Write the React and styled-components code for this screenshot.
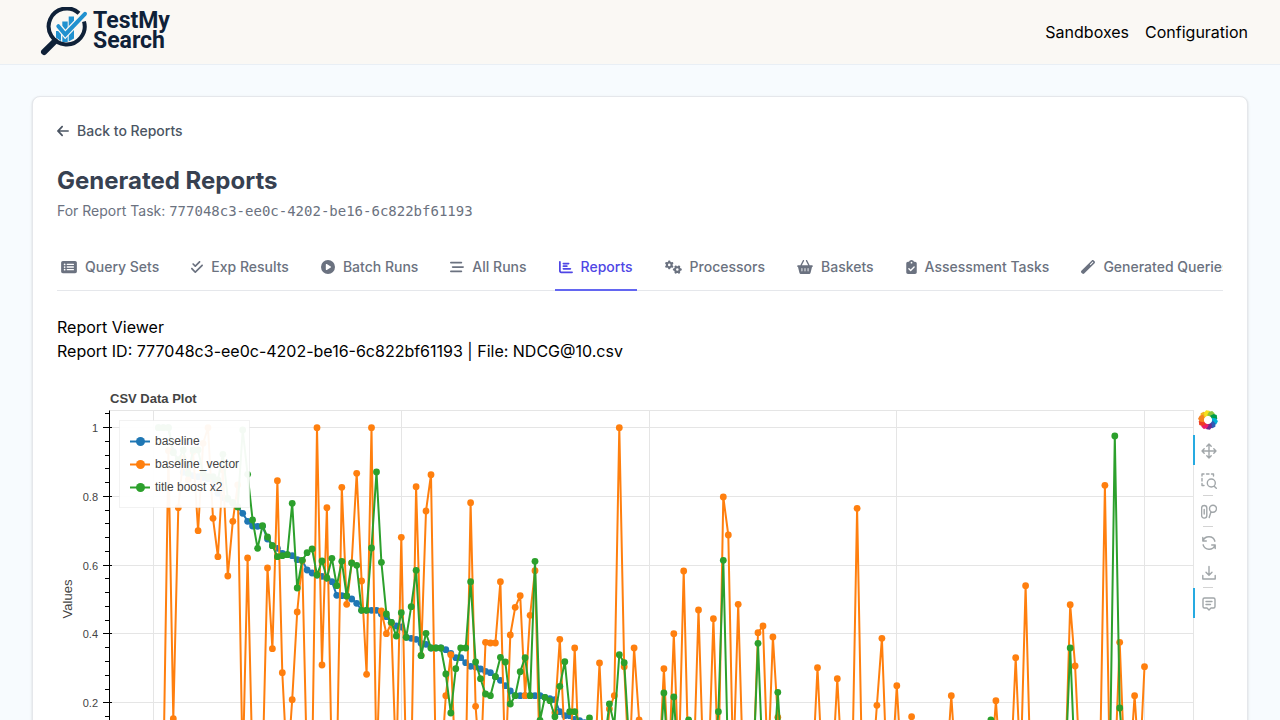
import React from "react";
import styled, { createGlobalStyle } from "styled-components";
import {
  FaArrowLeft,
  FaRectangleList,
  FaCheckDouble,
  FaCirclePlay,
  FaBarsStaggered,
  FaChartBar,
  FaGears,
  FaBasketShopping,
  FaClipboardCheck,
  FaWandMagic,
} from "react-icons/fa6";

const GlobalStyle = createGlobalStyle`
  *, *::before, *::after { box-sizing: border-box; }
  body {
    margin: 0;
    background: #f7fbfe;
    color: #000;
    font-family: Inter, "Liberation Sans", sans-serif;
    font-size: 16px;
    line-height: 24px;
  }
`;

const Header = styled.header`
  display: flex;
  align-items: center;
  justify-content: space-between;
  height: 65px;
  padding: 0 32px 0 40px;
  background: #faf8f4;
  border-bottom: 1px solid #e9eff5;
`;

const Brand = styled.a`
  display: flex;
  align-items: center;
  gap: 3px;
  color: #0f2138;
  text-decoration: none;
`;

const BrandName = styled.span`
  padding-bottom: 2px;
  font-family: Roboto, "Liberation Sans", sans-serif;
  font-size: 23px;
  font-weight: 700;
  line-height: 20px;
`;

const HeaderLinks = styled.nav`
  display: flex;
  gap: 16px;
`;

const HeaderLink = styled.a`
  color: #000;
  text-decoration: none;
`;

const Main = styled.main`
  padding: 31px 32px;
`;

const Card = styled.section`
  padding: 24px;
  background: #fff;
  border: 1px solid #e5e7eb;
  border-radius: 8px;
  box-shadow: 0 1px 3px rgba(0, 0, 0, 0.1), 0 1px 2px rgba(0, 0, 0, 0.06);
`;

const BackLink = styled.a`
  display: flex;
  align-items: center;
  gap: 8px;
  width: fit-content;
  margin-bottom: 24px;
  color: #4b5563;
  font-size: 14px;
  font-weight: 500;
  line-height: 20px;
  text-decoration: none;

  svg {
    width: 12px;
    height: 14px;
  }
`;

const Title = styled.h1`
  margin: 0;
  color: #374151;
  font-size: 24px;
  font-weight: 700;
  line-height: 32px;
`;

const Subtitle = styled.p`
  margin: 4px 0 24px;
  color: #6b7280;
  font-size: 14px;
  line-height: 20px;
`;

const TaskId = styled.span`
  font-family: "DejaVu Sans Mono", monospace;
`;

const Tabs = styled.nav`
  display: flex;
  gap: 24px;
  overflow: hidden;
  box-shadow: inset 0 -1px 0 #e5e7eb;
`;

const Tab = styled.a`
  display: flex;
  flex-shrink: 0;
  align-items: center;
  gap: 8px;
  padding: 12px 4px;
  border-bottom: 2px solid ${(p) => (p.$active ? "#6366f1" : "transparent")};
  color: ${(p) => (p.$active ? "#4f46e5" : "#6b7280")};
  font-size: 14px;
  font-weight: 500;
  line-height: 20px;
  white-space: nowrap;
  text-decoration: none;

  svg {
    width: ${(p) => p.$iconWidth}px;
    height: 14px;
  }
`;

const Summary = styled.div`
  margin: 24px 0;
`;

const SummaryLine = styled.p`
  margin: 0;
`;

const Figure = styled.div`
  display: flex;
  align-items: flex-start;
`;

const Plot = styled.svg`
  display: block;
  flex: 1;
  min-width: 0;
  height: auto;
  overflow: visible;
  font-family: "Liberation Sans", Arial, sans-serif;
`;

const Toolbar = styled.div`
  display: flex;
  flex-direction: column;
  align-items: center;
  width: 30px;
  padding-top: 18px;
`;

const ToolbarLogo = styled.a`
  display: grid;
  place-items: center;
  width: 30px;
  height: 30px;
`;

const Tool = styled.button`
  display: grid;
  place-items: center;
  width: 30px;
  height: 30px;
  padding: 1px 0 0;
  background: none;
  border: 0 solid transparent;
  border-left: 2px solid ${(p) => (p.$active ? "#26aae1" : "transparent")};
  color: #a1a6a9;
`;

const Divider = styled.span`
  width: 10px;
  height: 1px;
  background: #d3d3d3;
`;

const tabs = [
  { label: "Query Sets", Icon: FaRectangleList, iconWidth: 16 },
  { label: "Exp Results", Icon: FaCheckDouble, iconWidth: 12 },
  { label: "Batch Runs", Icon: FaCirclePlay, iconWidth: 14 },
  { label: "All Runs", Icon: FaBarsStaggered, iconWidth: 14 },
  { label: "Reports", Icon: FaChartBar, iconWidth: 14, active: true },
  { label: "Processors", Icon: FaGears, iconWidth: 17 },
  { label: "Baskets", Icon: FaBasketShopping, iconWidth: 16 },
  { label: "Assessment Tasks", Icon: FaClipboardCheck, iconWidth: 11 },
  { label: "Generated Queries", Icon: FaWandMagic, iconWidth: 14 },
];

/* Samples are depths below the plot's top edge, in thirds of a unit. */
const ZERO = 1084;
const COUNT = 200;

const baseline = {
  head: [
    53, 53, 53, 125, 150, 187, 192, 197, 200, 203, 206, 210, 250, 263, 268, 280, 291, 310, 334, 348,
    349, 349, 387, 407, 415, 430, 434, 437, 449, 451, 480, 489, 495, 499, 505, 515, 556, 557, 558, 567,
    580, 601, 601, 601, 601, 612, 620, 637, 648, 651, 682, 685, 688, 700, 703, 714, 714, 714, 719, 730,
    743, 743, 758, 769, 771, 777, 784, 788, 800, 811, 827, 843, 857, 857, 857, 857, 857, 857, 862, 866,
    869, 905, 917, 917, 928, 932, 938, 945, 970, 1000, 1030,
  ],
  tail: {},
};

const baselineVector = {
  head: [
    ZERO, ZERO, 122, 926, 293, 145, 210, 125, 362, 100, 53, 325, 440, 180, 498, 334, 225, ZERO, 444, ZERO,
    ZERO, ZERO, 474, 716, 212, 788, ZERO, 869, 606, 452, ZERO, ZERO, 53, 765, 293, ZERO, ZERO, 232, 583, 459,
    190, 513, 793, 53, ZERO, 603, 671, 640, ZERO, 382, ZERO, ZERO, 230, 736, 303, 194, ZERO, ZERO, 857, 734,
    ZERO, ZERO, ZERO, 278, 889, ZERO, 697, 699, 699, 515, ZERO, 675, 592, 557, 857, 616, 482, ZERO, ZERO, ZERO,
    908, 688, 1000, ZERO, 714, ZERO, ZERO, ZERO, ZERO, 759, ZERO, 897, 857, 53, 770, ZERO, 714, 930,
  ],
  tail: {
    103: 776, 105: 671, 107: 483, 110: 600, 113: 626, 115: 261, 116: 375, 118: 583, 122: 668, 123: 648,
    125: 681, 126: 922, 134: 773, 138: 806, 142: 295, 146: 886, 147: 685, 150: 827, 153: 920, 161: 857,
    170: 872, 174: 743, 176: 527, 185: 584, 186: 768, 192: 226, 195: 697, 198: 857, 200: 770,
  },
};

const titleBoost = {
  head: [
    53, 53, 53, 128, 150, 120, 190, 120, 120, 190, 200, 200, 210, 133, 265, 277, 291, 60, 193, 330,
    415, 347, 381, 407, 440, 437, 434, 280, 534, 451, 428, 417, 495, 453, 504, 445, 527, 454, 558, 459,
    466, 601, 601, 414, 186, 457, 612, 637, 678, 608, 682, 590, 481, 737, 670, 714, 714, 714, 792, 909,
    776, 714, 714, 515, 756, 806, 852, 857, 800, 742, 756, 882, 857, 785, 743, 857, 454, 931, 862, 872,
    920, 829, 755, 905, 905, 940, 940, 924, 1000, ZERO, 1000, 882, 945, 734, 758, 1000,
  ],
  tail: {
    103: 849, 105: 861, 108: 930, 114: 905, 115: 451, 122: 700, 126: 847, 169: 930, 185: 714, 194: 78, 195: 894,
  },
};

const series = [
  { name: "baseline", color: "#1f77b4", data: baseline },
  { name: "baseline_vector", color: "#ff7f0e", data: baselineVector },
  { name: "title boost x2", color: "#2ca02c", data: titleBoost },
];

const PLOT = { left: 52.5, right: 1136.5, top: 23.5, bottom: 402.5 };

const toPoints = ({ head, tail }) =>
  Array.from({ length: COUNT }, (_, k) => {
    const i = k + 1;
    const depth = head[k] ?? tail[i] ?? ZERO;
    return [+(96.5 + i * 4.955).toFixed(1), +(23 + depth / 3).toFixed(1)];
  });

const yTicks = ["1", "0.8", "0.6", "0.4", "0.2"].map((label, k) => ({
  label,
  y: Math.floor(40.6 + k * 68.8) + 0.5,
}));
const minorTicks = Array.from({ length: 27 }, (_, k) => Math.floor(26.8 + k * 13.76) + 0.5);
const xGrid = [96.5, 344.5, 592.5, 839.5, 1087.5];

function Chart() {
  return (
    <Plot viewBox="0 0 1136 420" role="img" aria-label="CSV Data Plot">
      <text x="53" y="16" fontSize="13" fontWeight="700" fill="#444">
        CSV Data Plot
      </text>
      <text transform="translate(15 212) rotate(-90)" textAnchor="middle" fontSize="13" fill="#444">
        Values
      </text>
      <g stroke="#e5e5e5" fill="none">
        {xGrid.map((x) => (
          <line key={x} x1={x} x2={x} y1={PLOT.top} y2={PLOT.bottom} />
        ))}
        {yTicks.map((t) => (
          <line key={t.label} x1={PLOT.left} x2={PLOT.right} y1={t.y} y2={t.y} />
        ))}
        <rect x={PLOT.left} y={PLOT.top} width={PLOT.right - PLOT.left} height={PLOT.bottom - PLOT.top} />
      </g>
      <g stroke="#000">
        <line x1={PLOT.left} x2={PLOT.left} y1={PLOT.top} y2={PLOT.bottom} />
        {yTicks.map((t) => (
          <line key={t.label} x1="46" x2="55" y1={t.y} y2={t.y} />
        ))}
        {minorTicks.map((y) => (
          <line key={y} x1="48" x2="52" y1={y} y2={y} />
        ))}
      </g>
      <g fontSize="11" fill="#444" textAnchor="end">
        {yTicks.map((t) => (
          <text key={t.label} x="41" y={t.y + 4}>
            {t.label}
          </text>
        ))}
      </g>
      {series.map((s) => {
        const points = toPoints(s.data);
        return (
          <g key={s.name} fill={s.color}>
            <polyline points={points.join(" ")} fill="none" stroke={s.color} strokeWidth="2" strokeLinejoin="bevel" />
            {points.map(([x, y]) => (
              <circle key={x} cx={x} cy={y} r="3.4" />
            ))}
          </g>
        );
      })}
      <rect x="62.5" y="33.5" width="130" height="87" fill="#fff" fillOpacity="0.95" stroke="#e5e5e5" strokeOpacity="0.5" />
      {series.map((s, k) => (
        <g key={s.name} transform={`translate(73 ${54 + k * 23})`}>
          <path d="M0 0.5H20" stroke={s.color} strokeWidth="2" />
          <circle cx="10.5" cy="0.5" r="4.5" fill={s.color} />
          <text x="25" y="4" fontSize="12" fill="#444">
            {s.name}
          </text>
        </g>
      ))}
    </Plot>
  );
}

const petals = ["#f0b323", "#f7e01d", "#8cc63f", "#009c4a", "#00b0d8", "#2e5bb8", "#6b2b90", "#ec1c6b", "#ef3b24", "#f58220"];

function BokehLogo() {
  return (
    <svg width="20" height="20" viewBox="-10 -10 20 20" aria-hidden="true">
      {petals.map((color, k) => (
        <path key={color} d="M-2.6 -4L-2 -8L0.5 -10L3.6 -8.6L5 -5.2L2.6 -4Z" fill={color} transform={`rotate(${k * 36 - 50})`} />
      ))}
    </svg>
  );
}

const toolPaths = {
  Pan: "M8 1V15M1 8H15M5.8 3.2L8 1L10.2 3.2M5.8 12.8L8 15L10.2 12.8M3.2 5.8L1 8L3.2 10.2M12.8 5.8L15 8L12.8 10.2",
  "Box Zoom": "M1 3V1H3M5.5 1H8M10.5 1H12.5V3M1 5.5V8M1 10.5V12.5H3M13.2 13.2L15.3 15.3M14.3 10a4 4 0 1 1-8 0a4 4 0 1 1 8 0",
  "Wheel Zoom":
    "M3.2 1.5a2.6 2.6 0 0 1 2.6 2.6v7.4a2.6 2.6 0 0 1-5.2 0V4.1a2.6 2.6 0 0 1 2.6-2.6ZM3.2 5.5v4.5M15.5 4.8a3.5 3.5 0 1 1-7 0a3.5 3.5 0 1 1 7 0M10 7.8L8.2 13.5",
  Reset: "M1.8 2.5V6H5.3M2 5.8A6.3 6.3 0 0 1 13.9 6.2M14.2 13.500V10H10.700M14 10.200A6.300 6.300 0 0 1 2.100 9.800",
  Save: "M8 1.5V10M5 7.3L8 10.3L11 7.3M1.8 10.5V14H14.2V10.5",
  Hover: "M3.5 2H12.5Q14 2 14 3.5V10.5Q14 12 12.5 12H10L8 14L6 12H3.5Q2 12 2 10.5V3.5Q2 2 3.5 2ZM5 5.5H11M5 8.5H9.5",
};

function PlotTool({ name, active }) {
  return (
    <Tool type="button" aria-label={name} $active={active}>
      <svg width="16" height="16" viewBox="0 0 16 16" fill="none" stroke="currentColor" strokeWidth="1.4" strokeLinecap="round" strokeLinejoin="round">
        <path d={toolPaths[name]} />
      </svg>
    </Tool>
  );
}

function BrandMark() {
  return (
    <svg width="50" height="50" viewBox="0 0 50 50" fill="none" aria-hidden="true">
      <path d="M39 6.3A18 18 0 1 0 44 14.5" stroke="#0f2138" strokeWidth="4" />
      <path d="M15 34.2L4 45" stroke="#0f2138" strokeWidth="6" strokeLinecap="round" />
      <path d="M16 24h5v10l-5-3.5ZM22.3 14.5h5.4v20.5h-5.4ZM28.7 9.5h5.3v22l-5.3 3Z" fill="#2191cf" />
      <path d="M18.3 19.2L25.3 27.5L45 6.8" stroke="#faf8f4" strokeWidth="6.5" />
      <path d="M18.3 19.2L25.3 27.5L45 6.8" stroke="#2191cf" strokeWidth="4" strokeLinecap="round" />
    </svg>
  );
}

export default function App() {
  return (
    <>
      <GlobalStyle />
      <Header>
        <Brand href="#">
          <BrandMark />
          <BrandName>
            TestMy
            <br />
            Search
          </BrandName>
        </Brand>
        <HeaderLinks>
          <HeaderLink href="#">Sandboxes</HeaderLink>
          <HeaderLink href="#">Configuration</HeaderLink>
        </HeaderLinks>
      </Header>
      <Main>
        <Card>
          <BackLink href="#">
            <FaArrowLeft />
            Back to Reports
          </BackLink>
          <Title>Generated Reports</Title>
          <Subtitle>
            For Report Task: <TaskId>777048c3-ee0c-4202-be16-6c822bf61193</TaskId>
          </Subtitle>
          <Tabs>
            {tabs.map(({ label, Icon, iconWidth, active }) => (
              <Tab key={label} href="#" $active={active} $iconWidth={iconWidth}>
                <Icon />
                {label}
              </Tab>
            ))}
          </Tabs>
          <Summary>
            <SummaryLine>Report Viewer</SummaryLine>
            <SummaryLine>Report ID: 777048c3-ee0c-4202-be16-6c822bf61193 | File: NDCG@10.csv</SummaryLine>
          </Summary>
          <Figure>
            <Chart />
            <Toolbar>
              <ToolbarLogo href="#" aria-label="Bokeh">
                <BokehLogo />
              </ToolbarLogo>
              <PlotTool name="Pan" active />
              <PlotTool name="Box Zoom" />
              <Divider />
              <PlotTool name="Wheel Zoom" />
              <Divider />
              <PlotTool name="Reset" />
              <PlotTool name="Save" />
              <Divider />
              <PlotTool name="Hover" active />
            </Toolbar>
          </Figure>
        </Card>
      </Main>
    </>
  );
}
